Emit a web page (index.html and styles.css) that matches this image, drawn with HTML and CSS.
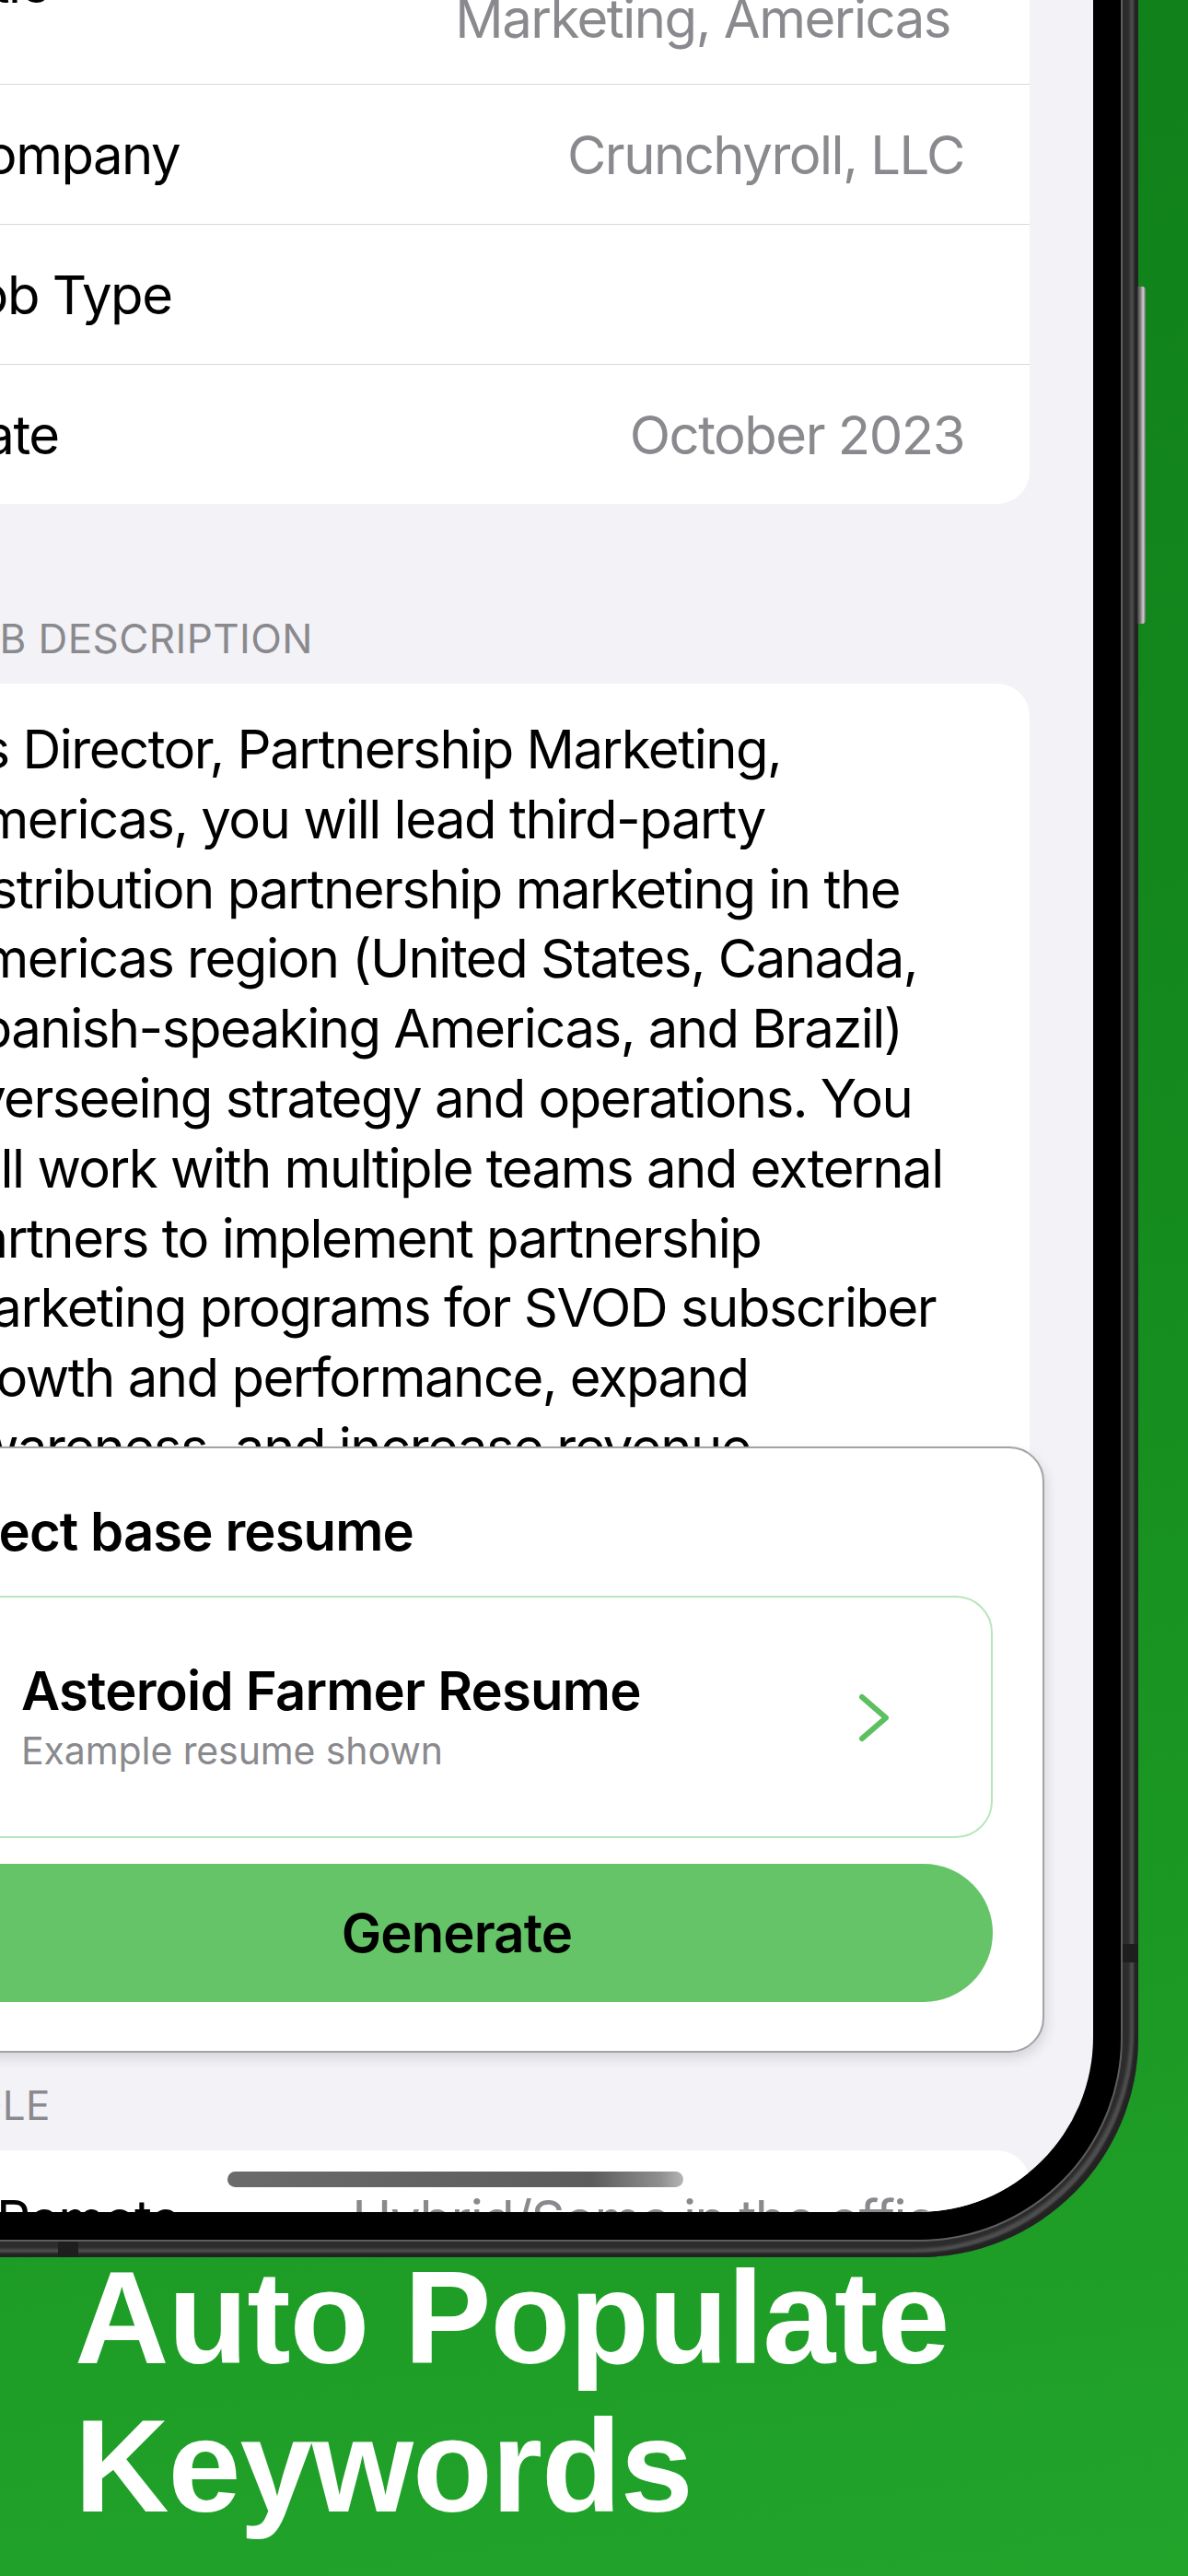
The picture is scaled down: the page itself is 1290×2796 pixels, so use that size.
FILE: index.html
```html
<!DOCTYPE html>
<html lang="en">
<head>
<meta charset="utf-8">
<title>Auto Populate Keywords</title>
<link rel="stylesheet" href="styles.css">
</head>
<body>
<div class="stage">
  <div class="phone">
    <div class="bezel">
      <div class="screen">
        <div class="scroll">
          <div class="card list">
            <div class="row row-tall">
              <span class="label">Title</span>
              <span class="value value-multi">Director, Partnership<br>Marketing, Americas</span>
            </div>
            <div class="row">
              <span class="label">Company</span>
              <span class="value">Crunchyroll, LLC</span>
            </div>
            <div class="row">
              <span class="label">Job Type</span>
              <span class="value"></span>
            </div>
            <div class="row">
              <span class="label">Date</span>
              <span class="value">October 2023</span>
            </div>
          </div>

          <div class="section-header">JOB DESCRIPTION</div>
          <div class="card desc">
            <span class="desc-line">As Director, Partnership Marketing,</span>
            <span class="desc-line">Americas, you will lead third-party</span>
            <span class="desc-line">distribution partnership marketing in the</span>
            <span class="desc-line">Americas region (United States, Canada,</span>
            <span class="desc-line">Spanish-speaking Americas, and Brazil)</span>
            <span class="desc-line">overseeing strategy and operations. You</span>
            <span class="desc-line">will work with multiple teams and external</span>
            <span class="desc-line">partners to implement partnership</span>
            <span class="desc-line">marketing programs for SVOD subscriber</span>
            <span class="desc-line">growth and performance, expand</span>
            <span class="desc-line">awareness, and increase revenue</span>
            <span class="desc-line">through distribution partners across</span>
            <span class="desc-line">devices, platforms and bundles. You</span>
            <span class="desc-line">will report to the VP of Partnership</span>
            <span class="desc-line">Marketing and manage a team of</span>
            <span class="desc-line">marketing managers based in Los</span>
            <span class="desc-line">Angeles and São Paulo.</span>
          </div>

          <div class="section-header">ROLE</div>
          <div class="card list">
            <div class="row row-inset">
              <span class="label">Remote</span>
              <span class="value">Hybrid/Some in the office</span>
            </div>
          </div>
        </div>

        <div class="sheet">
          <div class="sheet-title">Select base resume</div>
          <div class="resume-card">
            <div class="resume-text">
              <span class="resume-name">Asteroid Farmer Resume</span>
              <span class="resume-note">Example resume shown</span>
            </div>
            <svg class="chevron" width="40" height="60" viewBox="0 0 40 60" aria-hidden="true">
              <polyline points="6,8 32,30.5 6,53" fill="none" stroke="#5cbf60" stroke-width="6" stroke-linecap="round" stroke-linejoin="round"/>
            </svg>
          </div>
          <div class="generate">Generate</div>
        </div>

        <div class="home-indicator"></div>
      </div>
    </div>
    <div class="side-button"></div>
  </div>

  <h1 class="caption">Auto Populate<br>Keywords</h1>
</div>
</body>
</html>
```

FILE: styles.css
```css
* {
  box-sizing: border-box;
}

html,
body {
  margin: 0;
  padding: 0;
}

body {
  width: 1290px;
  height: 2796px;
  overflow: hidden;
  font-family: "Inter", "Roboto", "Noto Sans", sans-serif;
}

.stage {
  width: 1290px;
  height: 2796px;
  overflow: hidden;
  background: linear-gradient(172deg, #10801a 0%, #14891d 45%, #1c9a25 80%, #22a42b 100%);
}

/* ---------- phone frame ---------- */
.phone {
  position: relative;
  width: 1484px;
  height: 2699px;
  margin: -249px 0 0 -248px;
  padding: 19px;
  border-radius: 0 0 238px 0;
  background: #2c2c2c;
  box-shadow:
    inset -5px -5px 2px rgba(0, 0, 0, 0.55),
    inset -9px -9px 3px rgba(110, 110, 110, 0.55);
}

/* antenna breaks in the metal band */
.phone::before,
.phone::after {
  content: "";
  position: absolute;
  background: #1e1e1e;
}

.phone::before {
  left: 311px;
  bottom: 0;
  width: 22px;
  height: 19px;
}

.phone::after {
  right: 0;
  top: 2359px;
  width: 19px;
  height: 20px;
}

.bezel {
  position: relative;
  z-index: 1;
  height: 100%;
  padding: 30px;
  background: #000;
  border-radius: 0 0 219px 0;
  box-shadow: 0 0 0 2px #5e5e5e;
}

.screen {
  position: relative;
  height: 100%;
  overflow: hidden;
  background: #f2f2f7;
  border-radius: 0 0 190px 0;
}

.side-button {
  position: absolute;
  top: 560px;
  right: -8px;
  width: 9px;
  height: 366px;
  border-radius: 0 4px 4px 0;
  background: linear-gradient(to right, #3a3a3a 0%, #8c8c8c 45%, #d0d0d0 70%, #6a6a6a 100%);
}

/* ---------- list content ---------- */
.scroll {
  padding-top: 72px;
}

.card {
  margin: 0 69px;
  background: #fff;
  border-radius: 35px;
}

.row {
  display: flex;
  justify-content: space-between;
  align-items: center;
  min-height: 152px;
  padding: 0 71px 0 73px;
  border-bottom: 1px solid #d9d9dc;
  font-size: 58px;
  letter-spacing: -1.5px;
  line-height: 76px;
}

.row:last-child {
  border-bottom: none;
  min-height: 151px;
}

.row-tall {
  min-height: 220px;
}

.row-inset {
  padding-left: 126px;
}

.label {
  color: #000;
  white-space: nowrap;
}

.value {
  color: #8a8a8e;
  text-align: right;
  white-space: nowrap;
}

.value-multi {
  margin-right: 15px;
}

.section-header {
  margin: 121px 0 24px;
  padding-left: 139px;
  font-size: 44px;
  line-height: 50px;
  color: #8a8a8e;
  letter-spacing: 0.4px;
}

.desc {
  padding: 34px 60px 74px 72px;
  font-size: 58px;
  line-height: 75.8px;
  letter-spacing: -1.5px;
  color: #000;
}

.desc-line {
  display: block;
  white-space: nowrap;
}

/* ---------- floating sheet ---------- */
.sheet {
  position: absolute;
  top: 1770px;
  left: 53px;
  right: 53px;
  height: 658px;
  padding: 55px 54px 53px 58px;
  background: #fff;
  border: 2px solid #a3a3a6;
  border-radius: 38px;
  box-shadow: 2px 6px 14px rgba(0, 0, 0, 0.12);
  display: flex;
  flex-direction: column;
}

.sheet-title {
  height: 70px;
  font-size: 58px;
  line-height: 70px;
  font-weight: 600;
  letter-spacing: -0.9px;
  color: #000;
}

.resume-card {
  margin-top: 35px;
  height: 263px;
  display: flex;
  align-items: center;
  justify-content: space-between;
  padding: 0 106px 0 107px;
  border: 2px solid #b8e6bb;
  border-radius: 40px;
}

.resume-text {
  display: flex;
  flex-direction: column;
}

.resume-name {
  font-size: 58px;
  line-height: 64px;
  font-weight: 600;
  letter-spacing: -0.8px;
  color: #000;
}

.resume-note {
  margin-top: 9px;
  font-size: 41px;
  line-height: 48px;
  letter-spacing: -0.1px;
  color: #8a8a8e;
}

.chevron {
  display: block;
  flex: none;
}

.generate {
  margin-top: 28px;
  height: 150px;
  border-radius: 75px;
  background: #65c467;
  display: flex;
  align-items: center;
  justify-content: center;
  font-size: 58px;
  font-weight: 600;
  letter-spacing: -0.9px;
  color: #000;
}

.home-indicator {
  position: absolute;
  left: 446px;
  bottom: 27px;
  width: 495px;
  height: 17px;
  border-radius: 9px;
  background: linear-gradient(to right, #6b6b6b 0%, #5c5c5c 80%, #8f8f8f 95%, #b5b5b5 100%);
}

/* ---------- caption ---------- */
.caption {
  margin: -15px 0 0;
  padding-left: 81px;
  font-family: "Liberation Sans", Arial, sans-serif;
  font-weight: 700;
  font-size: 142px;
  line-height: 161px;
  letter-spacing: -1px;
  color: #fff;
}
```
